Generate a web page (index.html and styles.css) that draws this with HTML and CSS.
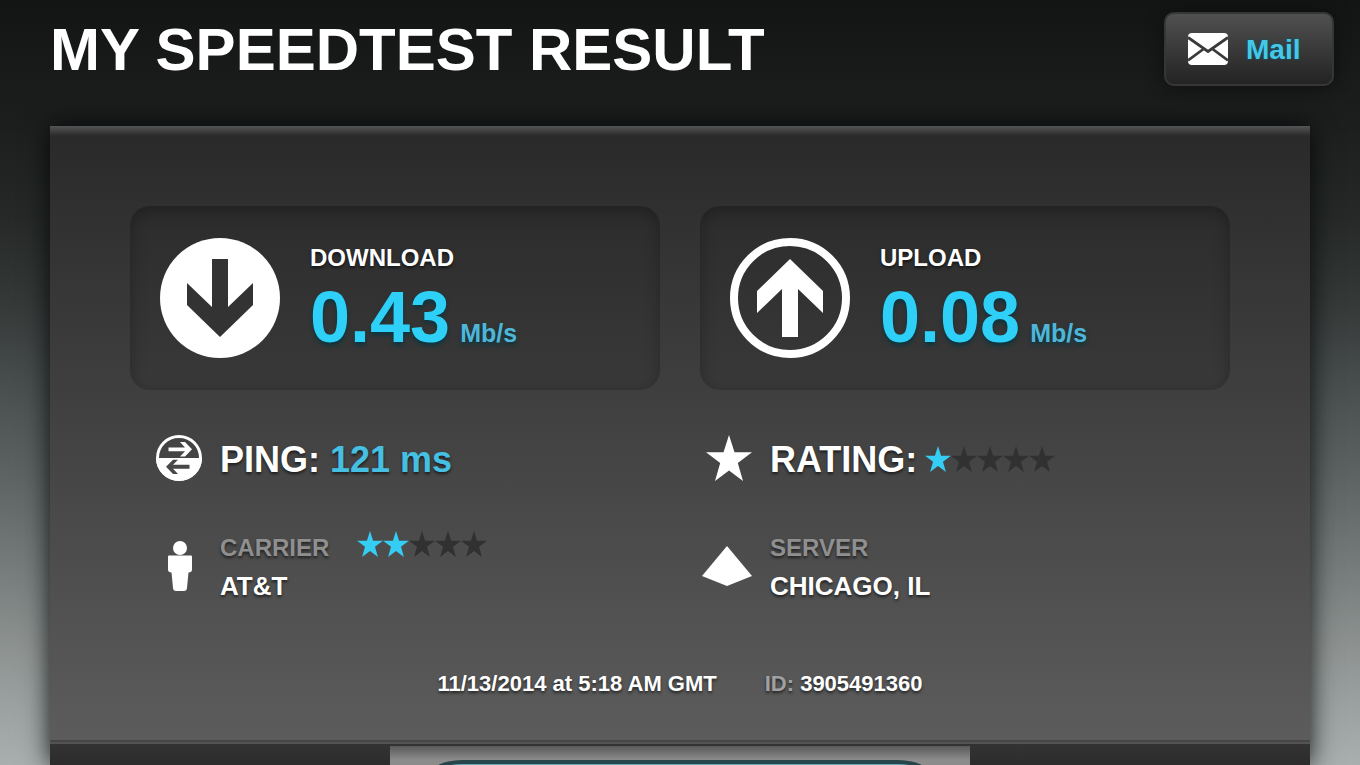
FILE: index.html
```html
<!DOCTYPE html>
<html lang="en">
<head>
<meta charset="utf-8">
<title>My Speedtest Result</title>
<link rel="stylesheet" href="styles.css">
</head>
<body>
<svg class="defs" aria-hidden="true">
  <symbol id="star" viewBox="0 0 46 46"><path d="M23 0l5.5 17.2H46L31.8 28 37 46 23 35.4 9 46l5.2-18L0 17.2h17.5z"/></symbol>
</svg>
<header class="header">
  <h1 class="title">MY SPEEDTEST RESULT</h1>
  <button class="mail" type="button">
    <svg class="mail-icon" viewBox="0 0 40 32" aria-hidden="true">
      <rect width="40" height="32" rx="4" fill="#fff"/>
      <path d="M0 4.500l20 14L40 4.500M0 27.500l15.500-11.500M40 27.500L24.500 16" fill="none" stroke="#3a3a3a" stroke-width="2.800"/>
    </svg>
    <span>Mail</span>
  </button>
</header>
<div class="sheet">
<main class="panel">
  <section class="speeds">
    <article class="speed">
      <svg class="speed-icon" viewBox="0 0 120 120" aria-hidden="true">
        <circle cx="60" cy="60" r="60" fill="#fff"/>
        <path d="M52 21h16v48l25-24v22L60 99 27 67V45l25 24z" fill="#333"/>
      </svg>
      <div>
        <h2 class="speed-label">DOWNLOAD</h2>
        <p class="speed-value">0.43 <span class="unit">Mb/s</span></p>
      </div>
    </article>
    <article class="speed">
      <svg class="speed-icon" viewBox="0 0 120 120" aria-hidden="true">
        <circle cx="60" cy="60" r="56" fill="none" stroke="#fff" stroke-width="8"/>
        <path d="M52 99h16V51l25 24V53L60 21 27 53v22l25-24z" fill="#fff"/>
      </svg>
      <div>
        <h2 class="speed-label">UPLOAD</h2>
        <p class="speed-value">0.08 <span class="unit">Mb/s</span></p>
      </div>
    </article>
  </section>
  <section class="facts">
    <div class="fact">
      <svg class="fact-icon" viewBox="0 0 46 46" aria-hidden="true">
        <circle cx="23" cy="23" r="21.500" fill="none" stroke="#fff" stroke-width="3"/>
        <path d="M0 23a23 23 0 0 0 46 0z" fill="#fff"/>
        <path d="M12.500 12.500H29L24 7h5l7 7.300-7 7.200h-5l5-5.300H12.500z" fill="#fff"/>
        <path d="M33.500 29.800H17l5-5h-5l-7 7 7 7.200h5l-5-5.300h16.500z" fill="#484848"/>
      </svg>
      <p class="fact-main">PING: <span class="accent">121 ms</span></p>
    </div>
    <div class="fact">
      <svg class="fact-icon" fill="#fff" aria-hidden="true"><use href="#star"/></svg>
      <p class="fact-main">RATING:</p>
      <span class="stars" role="img" aria-label="1 of 5 stars">
        <svg class="star on"><use href="#star"/></svg><svg class="star"><use href="#star"/></svg><svg class="star"><use href="#star"/></svg><svg class="star"><use href="#star"/></svg><svg class="star"><use href="#star"/></svg>
      </span>
    </div>
    <div class="fact detail">
      <svg class="fact-icon person" viewBox="0 0 24 50" fill="#fff" aria-hidden="true">
        <circle cx="12" cy="7" r="7"/>
        <path d="M1 14.500h22q1 0 1 1v13q0 3-3.500 3L19 47q-.3 3-3 3H8q-2.700 0-3-3L3.500 31.500q-3.500 0-3.500-3v-13q0-1 1-1z"/>
      </svg>
      <div>
        <h3 class="detail-label">CARRIER</h3>
        <p class="detail-value">AT&amp;T</p>
      </div>
      <span class="stars" role="img" aria-label="2 of 5 stars">
        <svg class="star on"><use href="#star"/></svg><svg class="star on"><use href="#star"/></svg><svg class="star"><use href="#star"/></svg><svg class="star"><use href="#star"/></svg><svg class="star"><use href="#star"/></svg>
      </span>
    </div>
    <div class="fact detail">
      <svg class="fact-icon server" viewBox="0 0 50 40" fill="#fff" aria-hidden="true"><path d="M25 0l25 30-25 10L0 30z"/></svg>
      <div>
        <h3 class="detail-label">SERVER</h3>
        <p class="detail-value">CHICAGO, IL</p>
      </div>
    </div>
  </section>
  <p class="meta">
    <span>11/13/2014 at 5:18 AM GMT</span>
    <span><span class="muted">ID:</span> 3905491360</span>
  </p>
</main>
<footer class="footer">
  <div class="banner"><div class="banner-frame"></div></div>
</footer>
</div>
</body>
</html>
```
FILE: styles.css
```css
* { box-sizing: border-box; }
html { height: 100%; }
body {
  margin: 0;
  height: 100vh;
  padding: 0 50px;
  overflow: hidden;
  display: flex;
  flex-direction: column;
  font-family: "Liberation Sans", Arial, sans-serif;
  font-weight: bold;
  color: #fff;
  background: linear-gradient(#131514 0, #1c1e1e 120px, #262928 220px, #343837 300px, #474c4c 380px, #5e6363 480px, #757a7a 566px, #8e9392 650px, #a9afaf 765px);
}
h1, h2, h3, p { margin: 0; font-weight: bold; }
.defs { position: absolute; width: 0; height: 0; }

.header {
  flex: none;
  display: flex;
  justify-content: space-between;
  align-items: flex-start;
  height: 126px;
  padding-top: 12px;
  margin-right: -24px;
}
.title { font-size: 60px; line-height: 76px; }
.mail {
  display: flex;
  align-items: center;
  gap: 18px;
  width: 170px;
  height: 74px;
  padding: 0 22px;
  border: 2px solid #363636;
  border-radius: 10px;
  background: linear-gradient(#505050, #232323);
  box-shadow: 0 0 16px #0c0e0e;
  color: #44c8e8;
  font: inherit;
  font-size: 28px;
  text-shadow: 0 0 3px #0a5a70;
}
.mail span { padding-top: 2px; }
.mail-icon { flex: none; width: 40px; height: 32px; }

.sheet {
  flex: 1;
  min-height: 0;
  display: flex;
  flex-direction: column;
  box-shadow: 0 0 24px rgba(0, 6, 6, .9);
}
.panel {
  flex: none;
  padding: 80px 80px 42px;
  background:
    linear-gradient(#555, rgba(80, 80, 80, 0) 10px),
    linear-gradient(#292929, #5c5c5c);
  border-bottom: 2px solid #464646;
  text-shadow: 0 2px 3px rgba(0, 0, 0, .6);
}
.speeds { display: grid; grid-template-columns: 1fr 1fr; gap: 40px; }
.speed {
  display: flex;
  gap: 30px;
  height: 184px;
  padding: 32px 30px;
  border-radius: 20px;
  background: linear-gradient(#2c2c2c, #393939);
  box-shadow: inset 0 4px 16px rgba(0, 0, 0, .28);
}
.speed-icon { flex: none; width: 120px; height: 120px; }
.speed-label { margin-top: 6px; font-size: 24px; line-height: 28px; }
.speed-value {
  display: flex;
  align-items: baseline;
  gap: 10px;
  font-size: 72px;
  line-height: 90px;
  color: #2fd0f7;
  text-shadow: 0 3px 4px #0a3540;
}
.unit { font-size: 25px; color: #4fb6d8; }

.facts {
  display: grid;
  grid-template-columns: 1fr 1fr;
  grid-template-rows: 46px 78px;
  row-gap: 46px;
  margin-top: 45px;
}
.fact { display: flex; align-items: center; }
.fact-icon { flex: none; width: 46px; height: 46px; margin: 0 18px 0 26px; }
.fact-main { padding-top: 4px; font-size: 36px; line-height: 46px; }
.accent { color: #45c0e2; }
.person { width: 24px; height: 50px; margin: 0 28px 0 38px; }
.server { width: 50px; height: 40px; margin: 0 18px 0 22px; }
.stars { display: flex; margin-left: 8px; padding-top: 2px; }
.star { width: 26px; height: 26px; fill: #313131; }
.on { fill: #35cdf3; }
.detail .stars { align-self: flex-start; margin-left: 28px; padding-top: 4px; }
.detail-label { padding-top: 6px; font-size: 24px; line-height: 34px; color: #8f8f8f; }
.detail-value { font-size: 26px; line-height: 42px; }

.meta {
  display: flex;
  justify-content: center;
  gap: 48px;
  margin-top: 65px;
  font-size: 22px;
  line-height: 28px;
}
.muted { color: #a0a0a0; }

.footer {
  flex: 1;
  min-height: 0;
  overflow: hidden;
  border-top: 2px solid #535353;
  background: linear-gradient(#333, #2c2c2c 21px);
}
.banner {
  width: 46%;
  height: 120px;
  margin: 2px auto 0;
  padding: 14px 36px 0;
  background: linear-gradient(#5a5a5a, #8c8c8c 14px);
}
.banner-frame {
  height: 100px;
  border: 4px solid #27454a;
  border-radius: 36px / 20px;
  background: #66aab4;
}
```
